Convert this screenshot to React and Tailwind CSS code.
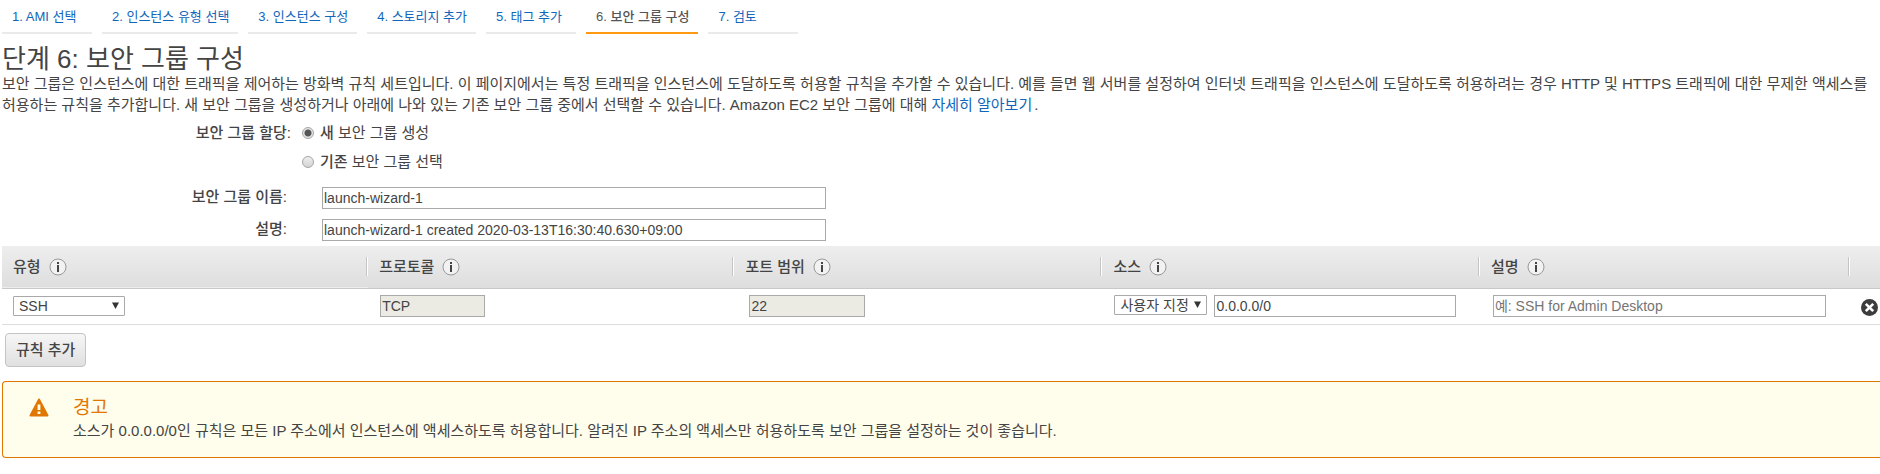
import { useState } from 'react';

const STEPS = [
  '1. AMI 선택',
  '2. 인스턴스 유형 선택',
  '3. 인스턴스 구성',
  '4. 스토리지 추가',
  '5. 태그 추가',
  '6. 보안 그룹 구성',
  '7. 검토',
];
const ACTIVE_STEP = 5;

const COLUMNS = ['유형', '프로토콜', '포트 범위', '소스', '설명'];

const FIELD = 'h-[22px] border border-[#a9a9a9] px-px text-sm leading-5 text-[#444] outline-none focus:border-[#1166bb]';
const RADIO =
  'size-3 shrink-0 appearance-none rounded-full border border-[#a5a5a5] bg-linear-to-b from-[#eee] to-[#d4d4d4] checked:bg-[radial-gradient(circle,#555_0_3px,#e4e4e4_4px)]';

function InfoIcon() {
  return (
    <svg className="size-[18px]" viewBox="0 0 18 18" aria-hidden="true">
      <circle cx="9" cy="9" r="8" fill="#f2f2f2" stroke="#999" />
      <rect x="8" y="4" width="2" height="2" fill="#444" />
      <path d="M8 7h2v7H8z" fill="#444" />
    </svg>
  );
}

function WarningIcon() {
  return (
    <svg className="h-[19px] w-5" viewBox="0 0 20 19" aria-hidden="true">
      <path d="M10 1.5 18.5 17.5h-17z" fill="#e07700" stroke="#e07700" strokeWidth="2" strokeLinejoin="round" />
      <path d="M8.6 6.5h2.8v5.5H8.6zM8.6 13.4h2.8v2.6H8.6z" fill="#fffdec" />
    </svg>
  );
}

function RemoveIcon() {
  return (
    <svg className="size-[17px]" viewBox="0 0 17 17" aria-hidden="true">
      <circle cx="8.5" cy="8.5" r="8.5" fill="#3c3c3c" />
      <path d="m4.8 4.8 7.4 7.4m0-7.4-7.4 7.4" stroke="#fff" strokeWidth="2.6" />
    </svg>
  );
}

function Select({ label, options, className }) {
  return (
    <span className={`relative block h-5 ${className}`}>
      <select
        aria-label={label}
        className="block h-5 w-full appearance-none rounded-[1px] border border-[#a9a9a9] bg-white pr-[18px] pl-[5px] text-sm leading-[18px] text-[#444] outline-none"
      >
        {options.map(o => <option key={o}>{o}</option>)}
      </select>
      <svg className="pointer-events-none absolute top-1.5 right-1.5 h-[7px] w-[7px]" viewBox="0 0 7 7" aria-hidden="true">
        <path d="M0 .5h7L3.5 7z" fill="#333" />
      </svg>
    </span>
  );
}

function Steps() {
  return (
    <nav className="ml-0.5 flex gap-2.5">
      {STEPS.map((step, i) => (
        <a
          key={step}
          href="#"
          aria-current={i === ACTIVE_STEP ? 'step' : undefined}
          className={`min-w-[90px] border-b-2 pt-[7px] pr-[9px] pb-[5px] pl-2.5 text-[13px] leading-5 whitespace-nowrap ${
            i === ACTIVE_STEP ? 'border-[#ff9911] font-medium text-[#555]' : 'border-[#eaeaea] text-[#1166bb]'
          }`}
        >
          {step}
        </a>
      ))}
    </nav>
  );
}

function GroupForm() {
  const [mode, setMode] = useState('new');
  const [name, setName] = useState('launch-wizard-1');
  const [description, setDescription] = useState('launch-wizard-1 created 2020-03-13T16:30:40.630+09:00');

  return (
    <form className="pt-[7px]">
      <fieldset className="flex gap-[11px]">
        <legend className="float-left w-[289px] text-right text-[15px] leading-[21px] font-medium">보안 그룹 할당:</legend>
        <div className="flex flex-col gap-2 text-[15px] leading-[21px]">
          <label className="flex items-center gap-1.5">
            <input type="radio" name="mode" checked={mode === 'new'} onChange={() => setMode('new')} className={RADIO} />
            <span><b className="font-medium">새</b> 보안 그룹 생성</span>
          </label>
          <label className="flex items-center gap-1.5">
            <input type="radio" name="mode" checked={mode === 'existing'} onChange={() => setMode('existing')} className={RADIO} />
            <span><b className="font-medium">기존</b> 보안 그룹 선택</span>
          </label>
        </div>
      </fieldset>
      <div className="mt-[15px] flex gap-[35px]">
        <label htmlFor="group-name" className="w-[285px] text-right text-[15px] leading-5 font-medium">보안 그룹 이름:</label>
        <input id="group-name" value={name} onChange={e => setName(e.target.value)} className={`w-[504px] ${FIELD}`} />
      </div>
      <div className="mt-2.5 flex gap-[35px]">
        <label htmlFor="group-description" className="w-[285px] text-right text-[15px] leading-5 font-medium">설명:</label>
        <input id="group-description" value={description} onChange={e => setDescription(e.target.value)} className={`w-[504px] ${FIELD}`} />
      </div>
    </form>
  );
}

function RuleTable() {
  return (
    <table className="mt-[5px] w-full table-fixed">
      <colgroup>
        <col className="w-[19.5%]" />
        <col className="w-[19.5%]" />
        <col className="w-[19.6%]" />
        <col className="w-[20.1%]" />
        <col className="w-[19.7%]" />
        <col />
      </colgroup>
      <thead>
        <tr className="h-[42px] border-b border-[#c8c8c8] bg-linear-to-b from-[#eee] to-[#dedede]">
          {COLUMNS.map(name => (
            <th key={name} scope="col" className="py-0 pl-[11px] text-left text-[15px] leading-5 font-medium">
              <div className="flex items-center gap-2">
                <span>{name}</span>
                <InfoIcon />
                <span className="ml-auto h-[19px] w-0.5 border-r border-l border-r-white border-l-[#c4c4c4]" />
              </div>
            </th>
          ))}
          <td />
        </tr>
      </thead>
      <tbody>
        <tr className="h-9 border-b border-[#ddd]">
          <td className="pl-[11px]">
            <Select label="유형" options={['SSH', 'HTTP', 'HTTPS']} className="w-28" />
          </td>
          <td className="pl-3">
            <input aria-label="프로토콜" value="TCP" readOnly className={`block w-[105px] bg-[#ebebe4] ${FIELD}`} />
          </td>
          <td className="pl-[15px]">
            <input aria-label="포트 범위" value="22" readOnly className={`block w-[116px] bg-[#ebebe4] ${FIELD}`} />
          </td>
          <td className="pl-3">
            <div className="flex gap-[7px]">
              <Select label="소스" options={['사용자 지정', '위치 무관', '내 IP']} className="w-[93px]" />
              <input aria-label="소스 주소" defaultValue="0.0.0.0/0" className={`w-[242px] ${FIELD}`} />
            </div>
          </td>
          <td className="pl-[13px]">
            <input
              aria-label="설명"
              placeholder="예: SSH for Admin Desktop"
              className={`block w-[333px] placeholder:text-[#757575] ${FIELD}`}
            />
          </td>
          <td>
            <button type="button" aria-label="규칙 삭제" className="mt-0.5 mr-0.5 ml-auto block">
              <RemoveIcon />
            </button>
          </td>
        </tr>
      </tbody>
    </table>
  );
}

export default function App() {
  return (
    <main className="bg-white font-['Liberation_Sans','Noto_Sans_CJK_KR',sans-serif] text-[#444]" lang="ko">
      <Steps />
      <div className="pl-0.5">
        <h1 className="pt-3 text-[26px] leading-[27px]">단계 6: 보안 그룹 구성</h1>
        <p className="text-[15px] leading-[21px] break-keep">
          보안 그룹은 인스턴스에 대한 트래픽을 제어하는 방화벽 규칙 세트입니다. 이 페이지에서는 특정 트래픽을 인스턴스에 도달하도록 허용할 규칙을 추가할 수 있습니다. 예를 들면 웹 서버를 설정하여 인터넷 트래픽을 인스턴스에 도달하도록 허용하려는 경우 HTTP 및 HTTPS 트래픽에 대한 무제한 액세스를 허용하는 규칙을 추가합니다. 새 보안 그룹을 생성하거나 아래에 나와 있는 기존 보안 그룹 중에서 선택할 수 있습니다. Amazon EC2 보안 그룹에 대해{' '}
          <a href="#" className="mr-0.5 inline-block text-[#1166bb]">자세히 알아보기</a>.
        </p>
        <GroupForm />
        <RuleTable />
        <button
          type="button"
          className="mt-2 ml-[3px] block rounded-sm border border-[#c4c4c4] bg-linear-to-b from-[#f6f6f6] to-[#e0e0e0] px-2.5 py-1.5 text-[15px] leading-5 font-medium"
        >
          규칙 추가
        </button>
        <section className="mt-3.5 flex gap-6 rounded-l-sm border border-r-0 border-[#e07700] bg-[#fffdec] pt-3.5 pb-4 pl-[26px]">
          <div className="pt-0.5">
            <WarningIcon />
          </div>
          <div>
            <h2 className="text-[19px] leading-6 text-[#e07700]">경고</h2>
            <p className="text-[15px] leading-[21px]">
              소스가 0.0.0.0/0인 규칙은 모든 IP 주소에서 인스턴스에 액세스하도록 허용합니다. 알려진 IP 주소의 액세스만 허용하도록 보안 그룹을 설정하는 것이 좋습니다.
            </p>
          </div>
        </section>
      </div>
    </main>
  );
}
